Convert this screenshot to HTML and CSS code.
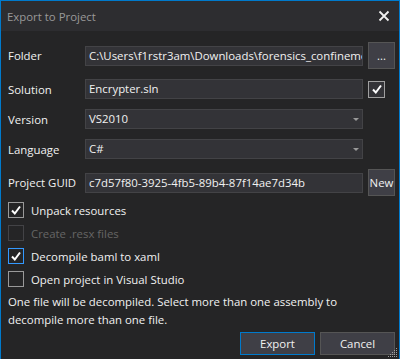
FILE: index.html
```html
<!DOCTYPE html>
<html>
<head>
<meta charset="utf-8">
<link rel="stylesheet" href="styles.css">
</head>
<body>
<div class="window">
  <div class="titlebar">
    <span class="title">Export to Project</span>
    <svg class="close" width="12" height="12" viewBox="0 0 12 12"><path d="M1.5 1.5 L10.5 10.5 M10.5 1.5 L1.5 10.5" stroke="#f1f1f1" stroke-width="1.8" fill="none"/></svg>
  </div>
  <div class="content">
    <div class="form">
      <div class="label">Folder</div>
      <div class="field">C:\Users\f1rstr3am\Downloads\forensics_confinement</div>
      <div class="btn square">...</div>

      <div class="label">Solution</div>
      <div class="field">Encrypter.sln</div>
      <div class="cellc"><span class="check light"><svg width="12" height="12" viewBox="0 0 12 12"><path d="M2 6.5 L4.8 9.5 L10 2.5" stroke="#fff" stroke-width="2" fill="none"/></svg></span></div>

      <div class="label">Version</div>
      <div class="field combo"><span>VS2010</span><span class="arrow"></span></div>
      <div></div>

      <div class="label">Language</div>
      <div class="field combo"><span>C#</span><span class="arrow"></span></div>
      <div></div>

      <div class="label">Project GUID</div>
      <div class="field">c7d57f80-3925-4fb5-89b4-87f14ae7d34b</div>
      <div class="btn square tall">New</div>
    </div>

    <div class="checks">
      <div class="crow"><span class="check"><svg width="12" height="12" viewBox="0 0 12 12"><path d="M2 6.5 L4.8 9.5 L10 2.5" stroke="#fff" stroke-width="2" fill="none"/></svg></span><span>Unpack resources</span></div>
      <div class="crow disabled"><span class="check dis"></span><span>Create .resx files</span></div>
      <div class="crow"><span class="check focus"><svg width="12" height="12" viewBox="0 0 12 12"><path d="M2 6.5 L4.8 9.5 L10 2.5" stroke="#fff" stroke-width="2" fill="none"/></svg></span><span>Decompile baml to xaml</span></div>
      <div class="crow"><span class="check"></span><span>Open project in Visual Studio</span></div>
    </div>

    <p class="info">One file will be decompiled. Select more than one assembly to decompile more than one file.</p>

    <div class="actions">
      <div class="btn action default">Export</div>
      <div class="btn action">Cancel</div>
    </div>
  </div>
  <svg class="grip" width="10" height="10" viewBox="0 0 10 10" fill="#a0a0a0">
    <rect x="8" y="0" width="1" height="1"/>
    <rect x="6" y="2" width="1" height="1"/><rect x="8" y="2" width="1" height="1"/>
    <rect x="4" y="4" width="1" height="1"/><rect x="6" y="4" width="1" height="1"/><rect x="8" y="4" width="1" height="1"/>
    <rect x="2" y="6" width="1" height="1"/><rect x="4" y="6" width="1" height="1"/><rect x="6" y="6" width="1" height="1"/><rect x="8" y="6" width="1" height="1"/>
    <rect x="0" y="8" width="1" height="1"/><rect x="2" y="8" width="1" height="1"/><rect x="4" y="8" width="1" height="1"/><rect x="6" y="8" width="1" height="1"/><rect x="8" y="8" width="1" height="1"/>
  </svg>
</div>
</body>
</html>
```

FILE: styles.css
```css
html, body {
  margin: 0;
  padding: 0;
  background: #252526;
}
body {
  font-family: "Open Sans", "Noto Sans", sans-serif;
  font-size: 11.4px;
  color: #f1f1f1;
}
.window {
  position: relative;
  width: 400px;
  height: 359px;
  box-sizing: border-box;
  border: 1px solid #007acc;
  border-bottom: none;
  background: #252526;
  overflow: hidden;
}
.titlebar {
  height: 30px;
  background: #2d2d30;
  display: flex;
  align-items: center;
  justify-content: space-between;
  padding: 0 9px 0 6px;
}
.title {
  color: #999999;
  font-size: 11.4px;
}
.close {
  display: block;
}
.content {
  padding: 11px 3px 0 7px;
}
.form {
  display: grid;
  grid-template-columns: 77px 278px 32px;
  grid-template-rows: 27px 20px 20px 20px 27px;
  row-gap: 10px;
  align-items: center;
}
.label {
  white-space: nowrap;
}
.field {
  height: 20px;
  box-sizing: border-box;
  background: #333337;
  border: 1px solid #434346;
  padding: 0 3px;
  line-height: 18px;
  white-space: nowrap;
  overflow: hidden;
}
.combo {
  display: flex;
  justify-content: space-between;
  padding-right: 0;
}
.arrow {
  width: 11px;
  position: relative;
}
.arrow::after {
  content: "";
  position: absolute;
  left: 2px;
  top: 8px;
  border-left: 3px solid transparent;
  border-right: 3px solid transparent;
  border-top: 3px solid #999999;
}
.btn {
  background: #3f3f46;
  border: 1px solid #555555;
  box-sizing: border-box;
  display: flex;
  align-items: center;
  justify-content: center;
  color: #f1f1f1;
  white-space: nowrap;
}
.square {
  height: 27px;
  width: 27px;
  margin-left: 5px;
}
.cellc {
  display: flex;
  align-items: center;
  padding-left: 5px;
}
.check {
  width: 16px;
  height: 16px;
  box-sizing: border-box;
  border: 1px solid #999999;
  background: #252526;
  display: flex;
  align-items: center;
  justify-content: center;
  flex: none;
}
.check.light {
  width: 17px;
  height: 17px;
  border-color: #a0a0a0;
  background: #333337;
}
.check.focus {
  border-color: #3399ff;
}
.check.dis {
  border-color: #434346;
}
.checks {
  margin-top: 6px;
  display: flex;
  flex-direction: column;
  gap: 7px;
}
.crow {
  display: flex;
  align-items: center;
  gap: 7px;
  height: 16px;
}
.disabled {
  color: #656565;
}
.info {
  margin: 6px 0 0 0;
  line-height: 18px;
  max-width: 355px;
}
.actions {
  display: flex;
  justify-content: flex-end;
  gap: 5px;
  margin-top: 3px;
  padding-right: 1px;
}
.action {
  width: 75px;
  height: 23px;
}
.default {
  border-color: #007acc;
}
.grip {
  position: absolute;
  right: 1px;
  bottom: 1px;
}
```
